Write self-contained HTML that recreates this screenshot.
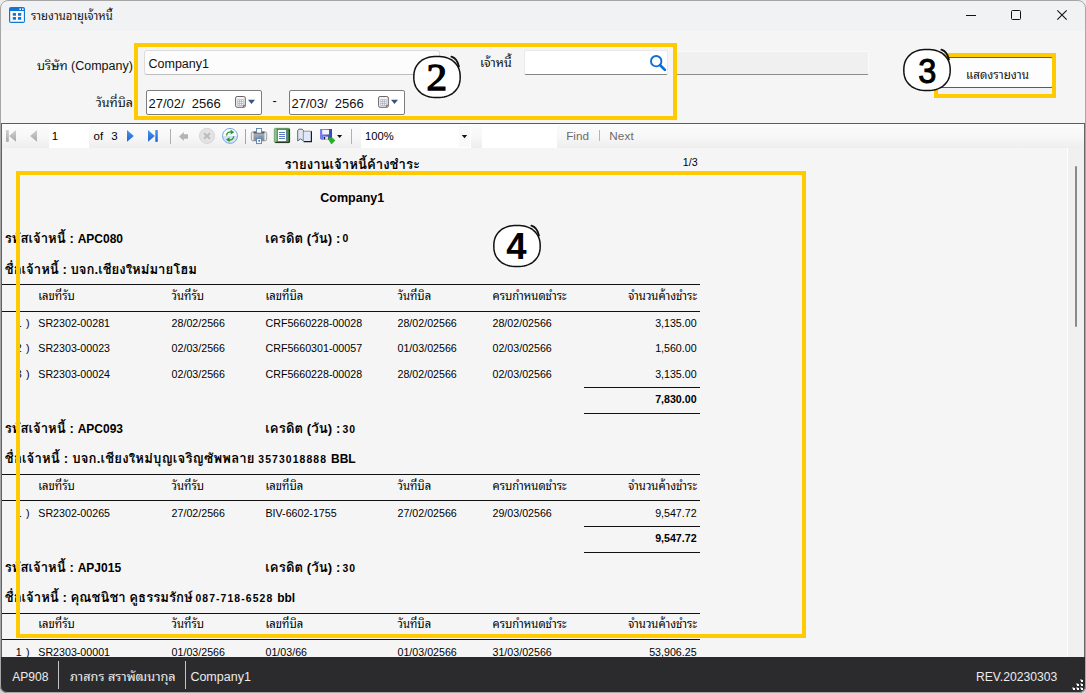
<!DOCTYPE html>
<html lang="th">
<head>
<meta charset="utf-8">
<title>รายงานอายุเจ้าหนี้</title>
<style>
*{box-sizing:border-box;margin:0;padding:0}
html,body{width:1086px;height:693px;overflow:hidden;background:#ececec}
body{background:linear-gradient(#ececec 0,#ececec 600px,#d4d4d4 601px,#d4d4d4 100%)}
body{font-family:"Liberation Sans","Noto Sans Thai Looped","Loma","Noto Sans Thai",sans-serif;color:#000;position:relative}
.a{position:absolute}
.t{position:absolute;white-space:pre;line-height:1;height:1em}
.r{text-align:right}
#win{position:absolute;left:0;top:0;width:1086px;height:693px;background:#f5f5f5;border-radius:8px 8px 7px 7px;overflow:hidden}
#frame{position:absolute;left:0;top:0;width:1086px;height:693px;border:1px solid #a6a6a6;border-radius:8px 8px 7px 7px;pointer-events:none}
.yb{position:absolute;border:4px solid #ffca00}
.rule{position:absolute;height:1px;background:#111}
.rep{font-size:10.67px;color:#000}
.repb{font-family:"Liberation Sans","Loma","Noto Sans Thai Looped",sans-serif;font-weight:bold;color:#000}
.sb{color:#ececec}
.tb{color:#000;font-size:12px}
</style>
</head>
<body>
<div id="win">
<div class="a" style="left:0;top:0;width:1086px;height:31px;background:#f1f2f4"></div>
<svg class="a" style="left:9px;top:7px" width="16" height="16" viewBox="0 0 16 16">
<rect x="0" y="0" width="16" height="16" rx="2" fill="#0b78d8"/>
<rect x="1.2" y="4" width="13.7" height="10.8" rx="0.4" fill="#fdf8f4"/>
<rect x="3.8" y="5.9" width="3.2" height="2.8" rx="0.5" fill="#0b78d8"/><rect x="9" y="5.9" width="3.2" height="2.8" rx="0.5" fill="#0b78d8"/>
<rect x="3.8" y="10" width="3.2" height="2.8" rx="0.5" fill="#0b78d8"/><rect x="9" y="10" width="3.2" height="2.8" rx="0.5" fill="#0b78d8"/>
<rect x="10.4" y="1.4" width="1.6" height="1.6" fill="#eef4fb"/><rect x="13" y="1.4" width="1.6" height="1.6" fill="#eef4fb"/>
</svg>
<div class="t " style="left:31.00px;top:11.43px;font-size:11.3px;color:#111">รายงานอายุเจ้าหนี้</div>
<svg class="a" style="left:960px;top:5px" width="116" height="20" viewBox="0 0 116 20">
<path d="M6 10.5H16" stroke="#111" stroke-width="1" fill="none"/>
<rect x="51.5" y="5.5" width="9" height="9" rx="1" stroke="#111" stroke-width="1" fill="none"/>
<path d="M97.3 5.3L106.7 14.7M106.7 5.3L97.3 14.7" stroke="#111" stroke-width="1.1" fill="none"/>
</svg>
<div class="t " style="right:953.10px;top:59.82px;font-size:12.5px;color:#111">บริษัท (Company)</div>
<div class="t " style="right:953.00px;top:96.82px;font-size:12.5px;color:#111">วันที่บิล</div>
<div class="a" style="left:144px;top:50px;width:296px;height:25px;background:#fcfcfc;border:1px solid #dcdcdc;border-bottom-color:#bdbdbd;border-radius:3px"></div>
<div class="t " style="left:148.50px;top:58.42px;font-size:12.5px;color:#111">Company1</div>
<div class="a" style="left:146px;top:90px;width:116px;height:25px;background:#fff;border:1px solid #7d7d7d;border-radius:2px"></div>
<div class="t " style="left:148.50px;top:96.90px;font-size:13px;color:#111">27/02/  2566</div>
<svg class="a" style="left:234px;top:95px" width="24" height="15" viewBox="0 0 24 15">
<rect x="2.2" y="2.2" width="9.6" height="10.8" rx="1.6" fill="#e9e9e9" opacity="0.8"/>
<rect x="1.6" y="1.5" width="9.7" height="10.8" rx="1.5" fill="#f1f4fb" stroke="#6f6362" stroke-width="1"/>
<rect x="3.3" y="4.2" width="6.4" height="6.8" fill="#b6b9c4"/>
<g fill="#fff"><rect x="4.2" y="5.1" width="1" height="1"/><rect x="6.1" y="5.1" width="1" height="1"/><rect x="8" y="5.1" width="1" height="1"/>
<rect x="4.2" y="7.1" width="1" height="1"/><rect x="6.1" y="7.1" width="1" height="1"/><rect x="8" y="7.1" width="1" height="1"/>
<rect x="4.2" y="9.1" width="1" height="1"/><rect x="6.1" y="9.1" width="1" height="1"/><rect x="8" y="9.1" width="1" height="1"/></g>
<path d="M9.4 12.3V10.4H11.3" fill="#e8ecf6" stroke="#6f6362" stroke-width="0.9"/>
<path d="M14 4.8H21L17.5 9Z" fill="#3a5280"/>
</svg>
<div class="a" style="left:289px;top:90px;width:116px;height:25px;background:#fff;border:1px solid #7d7d7d;border-radius:2px"></div>
<div class="t " style="left:291.50px;top:96.90px;font-size:13px;color:#111">27/03/  2566</div>
<svg class="a" style="left:377px;top:95px" width="24" height="15" viewBox="0 0 24 15">
<rect x="2.2" y="2.2" width="9.6" height="10.8" rx="1.6" fill="#e9e9e9" opacity="0.8"/>
<rect x="1.6" y="1.5" width="9.7" height="10.8" rx="1.5" fill="#f1f4fb" stroke="#6f6362" stroke-width="1"/>
<rect x="3.3" y="4.2" width="6.4" height="6.8" fill="#b6b9c4"/>
<g fill="#fff"><rect x="4.2" y="5.1" width="1" height="1"/><rect x="6.1" y="5.1" width="1" height="1"/><rect x="8" y="5.1" width="1" height="1"/>
<rect x="4.2" y="7.1" width="1" height="1"/><rect x="6.1" y="7.1" width="1" height="1"/><rect x="8" y="7.1" width="1" height="1"/>
<rect x="4.2" y="9.1" width="1" height="1"/><rect x="6.1" y="9.1" width="1" height="1"/><rect x="8" y="9.1" width="1" height="1"/></g>
<path d="M9.4 12.3V10.4H11.3" fill="#e8ecf6" stroke="#6f6362" stroke-width="0.9"/>
<path d="M14 4.8H21L17.5 9Z" fill="#3a5280"/>
</svg>
<div class="t " style="left:272.50px;top:94.92px;font-size:12.5px;">-</div>
<div class="t " style="right:574.10px;top:57.32px;font-size:12.5px;color:#111">เจ้าหนี้</div>
<div class="a" style="left:524px;top:50px;width:144px;height:25px;background:#fff;border:1px solid #e9e9e9;border-bottom:1px solid #868686;border-radius:2px"></div>
<svg class="a" style="left:647px;top:52px" width="22" height="22" viewBox="0 0 22 22">
<circle cx="9.2" cy="9.15" r="5.2" fill="none" stroke="#0a6ed8" stroke-width="1.9"/>
<path d="M13.2 13.3L17.9 17.9" stroke="#0a6ed8" stroke-width="2.7" stroke-linecap="round"/>
</svg>
<div class="a" style="left:676px;top:51px;width:193px;height:24px;background:#f0f0f0;border:1px solid #fafafa;border-bottom:1px solid #8c8c8c;border-radius:2px"></div>
<div class="yb" style="left:134px;top:43px;width:543px;height:77px"></div>
<div class="a" style="left:937px;top:88px;width:116px;height:7px;background:#f1f2f5"></div>
<div class="a" style="left:937px;top:57px;width:116px;height:31px;background:#fdfdfd;border:1px solid #0a6fd0;border-radius:2px"></div>
<div class="t " style="left:966.00px;top:69.18px;font-size:11.6px;color:#111">แสดงรายงาน</div>
<div class="yb" style="left:934px;top:53px;width:122px;height:45px"></div>
<svg class="a" style="left:406.5px;top:49.3px" width="60" height="56" viewBox="-30 -28 60 56">
<path d="M23.2 0.0L23.1 2.4L22.9 4.3L22.5 6.2L22.0 7.9L21.3 9.6L20.4 11.1L19.4 12.6L18.3 13.9L17.0 15.1L15.7 16.3L14.2 17.3L12.5 18.1L10.8 18.9L8.9 19.5L7.0 20.0L4.9 20.3L2.7 20.5L0.0 20.6L-2.7 20.5L-4.9 20.3L-7.0 20.0L-8.9 19.5L-10.8 18.9L-12.5 18.1L-14.2 17.3L-15.7 16.3L-17.0 15.1L-18.3 13.9L-19.4 12.6L-20.4 11.1L-21.3 9.6L-22.0 7.9L-22.5 6.2L-22.9 4.3L-23.1 2.4L-23.2 0.0L-23.1 -2.4L-22.9 -4.3L-22.5 -6.2L-22.0 -7.9L-21.3 -9.6L-20.4 -11.1L-19.4 -12.6L-18.3 -13.9L-17.0 -15.1L-15.7 -16.3L-14.2 -17.3L-12.5 -18.1L-10.8 -18.9L-8.9 -19.5L-7.0 -20.0L-4.9 -20.3L-2.7 -20.5L-0.0 -20.6L2.7 -20.5L4.9 -20.3L7.0 -20.0L8.9 -19.5L10.8 -18.9L12.5 -18.1L14.2 -17.3L15.7 -16.3L17.0 -15.1L18.3 -13.9L19.4 -12.6L20.4 -11.1L21.3 -9.6L22.0 -7.9L22.5 -6.2L22.9 -4.3L23.1 -2.4Z" fill="#fff" stroke="#111" stroke-width="1.5" stroke-linejoin="round"/>
<path d="M14.4 -20.3 C18 -19.2 20.8 -15.6 21.9 -10.6" fill="none" stroke="#111" stroke-width="1.9" stroke-linecap="round"/>
<text transform="translate(-0.2 12.6) scale(1.08 1)" x="0" y="0" text-anchor="middle" font-family="'Liberation Serif','DejaVu Serif',serif" font-weight="normal" font-size="38" fill="#000" stroke="#000" stroke-width="1.3">2</text>
</svg>
<svg class="a" style="left:897.2px;top:42.2px" width="60" height="56" viewBox="-30 -28 60 56">
<path d="M23.2 0.0L23.1 2.4L22.9 4.3L22.5 6.2L22.0 7.9L21.3 9.6L20.4 11.1L19.4 12.6L18.3 13.9L17.0 15.1L15.7 16.3L14.2 17.3L12.5 18.1L10.8 18.9L8.9 19.5L7.0 20.0L4.9 20.3L2.7 20.5L0.0 20.6L-2.7 20.5L-4.9 20.3L-7.0 20.0L-8.9 19.5L-10.8 18.9L-12.5 18.1L-14.2 17.3L-15.7 16.3L-17.0 15.1L-18.3 13.9L-19.4 12.6L-20.4 11.1L-21.3 9.6L-22.0 7.9L-22.5 6.2L-22.9 4.3L-23.1 2.4L-23.2 0.0L-23.1 -2.4L-22.9 -4.3L-22.5 -6.2L-22.0 -7.9L-21.3 -9.6L-20.4 -11.1L-19.4 -12.6L-18.3 -13.9L-17.0 -15.1L-15.7 -16.3L-14.2 -17.3L-12.5 -18.1L-10.8 -18.9L-8.9 -19.5L-7.0 -20.0L-4.9 -20.3L-2.7 -20.5L-0.0 -20.6L2.7 -20.5L4.9 -20.3L7.0 -20.0L8.9 -19.5L10.8 -18.9L12.5 -18.1L14.2 -17.3L15.7 -16.3L17.0 -15.1L18.3 -13.9L19.4 -12.6L20.4 -11.1L21.3 -9.6L22.0 -7.9L22.5 -6.2L22.9 -4.3L23.1 -2.4Z" fill="#fff" stroke="#111" stroke-width="1.5" stroke-linejoin="round"/>
<path d="M14.4 -20.3 C18 -19.2 20.8 -15.6 21.9 -10.6" fill="none" stroke="#111" stroke-width="1.9" stroke-linecap="round"/>
<text transform="translate(0.2 12.9) scale(0.93 1)" x="0" y="0" text-anchor="middle" font-family="'Liberation Sans','DejaVu Sans',sans-serif" font-weight="normal" font-size="35" fill="#000" stroke="#000" stroke-width="1.0">3</text>
</svg>
<div class="a" style="left:1px;top:123px;width:1084px;height:1px;background:#5c5c5c"></div>
<div class="a" style="left:2px;top:124px;width:1082px;height:1px;background:#fff"></div>
<div class="a" style="left:2px;top:125px;width:1082px;height:23px;background:linear-gradient(#fbfbfb,#f8f8f8 45%,#eeeeee)"></div>
<div class="a" style="left:1px;top:123px;width:1px;height:534px;background:#626262"></div>
<div class="a" style="left:1084px;top:123px;width:1px;height:534px;background:#666;z-index:3"></div>
<svg class="a" style="left:0;top:124px" width="360" height="24" viewBox="0 124 360 24">
<defs>
<linearGradient id="gg" x1="0" y1="0" x2="0" y2="1"><stop offset="0" stop-color="#cfcfcf"/><stop offset="1" stop-color="#a9a9a9"/></linearGradient>
<linearGradient id="gb" x1="0" y1="0" x2="0" y2="1"><stop offset="0" stop-color="#4a96f0"/><stop offset="1" stop-color="#1d62cf"/></linearGradient>
<linearGradient id="gp" x1="0" y1="0" x2="0" y2="1"><stop offset="0" stop-color="#b9bdc4"/><stop offset="1" stop-color="#7d828b"/></linearGradient>
<linearGradient id="gr" x1="0" y1="0" x2="0" y2="1"><stop offset="0" stop-color="#ffffff"/><stop offset="0.5" stop-color="#f4f8fd"/><stop offset="0.5" stop-color="#cfe0f6"/><stop offset="1" stop-color="#dce9f9"/></linearGradient>
<linearGradient id="gf" x1="0" y1="0" x2="1" y2="0"><stop offset="0" stop-color="#7f82ee"/><stop offset="0.6" stop-color="#5558d8"/><stop offset="1" stop-color="#3c3fae"/></linearGradient>
<linearGradient id="gl" x1="0" y1="0" x2="1" y2="0"><stop offset="0" stop-color="#a6cfa4"/><stop offset="0.25" stop-color="#5fa55d"/><stop offset="1" stop-color="#4a9448"/></linearGradient>
</defs>
<rect x="6" y="130" width="2.8" height="11.8" fill="url(#gg)"/><path d="M16 130V141.8L9.1 135.9Z" fill="url(#gg)"/>
<path d="M37 130V141.8L30.1 135.9Z" fill="url(#gg)"/>
<path d="M127 130V141.8L133.8 135.9Z" fill="url(#gb)"/>
<path d="M148 130V141.8L154.8 135.9Z" fill="url(#gb)"/><rect x="155.3" y="130" width="2.5" height="11.8" fill="url(#gb)"/>
<rect x="170" y="129" width="1" height="15" fill="#b0b0b0"/>
<path d="M179 136.5L183.8 132V134.2H188V138.8H183.8V141Z" fill="#b4b4b4"/>
<circle cx="207" cy="135.9" r="7.6" fill="#e3e3e3" stroke="#d2d2d2" stroke-width="0.8"/>
<path d="M204 133.3L210 138.7M210 133.3L204 138.7" stroke="#bcbcbc" stroke-width="2.1"/>
<circle cx="230" cy="135.9" r="7.5" fill="url(#gr)" stroke="#7ba8e2" stroke-width="1"/>
<path d="M226.6 135.6C226.6 132.6 229 131.6 231.6 131.9" fill="none" stroke="#2e9a2e" stroke-width="1.4"/><path d="M230.6 129.6L234.3 132.2L230.6 134.6Z" fill="#2e9a2e"/>
<path d="M233.6 136.2C233.6 139.2 231.2 140.2 228.6 139.9" fill="none" stroke="#2e9a2e" stroke-width="1.4"/><path d="M229.6 142.2L225.9 139.6L229.6 137.2Z" fill="#2e9a2e"/>
<rect x="245" y="129" width="1" height="15" fill="#a6a6a6"/>
<rect x="251.3" y="131.8" width="15.4" height="9" rx="1.8" fill="#e9eaec" stroke="#7d8087" stroke-width="0.7"/>
<rect x="253.6" y="131.6" width="10.8" height="9.2" fill="url(#gp)"/>
<rect x="253.6" y="131.6" width="10.8" height="1.9" fill="#5b5d62"/>
<rect x="256.5" y="128.5" width="5" height="4.6" fill="#fff" stroke="#5f7fa6" stroke-width="0.9"/>
<rect x="259" y="135.9" width="3.2" height="1.3" fill="#4f9df0"/>
<rect x="256.5" y="138.6" width="5" height="5" fill="#f6f9ff" stroke="#5f7fa6" stroke-width="0.9"/><rect x="258.4" y="140" width="1.6" height="1.6" fill="#2f6fe0"/>
<rect x="274.3" y="128.3" width="15.4" height="14.4" rx="1.2" fill="url(#gl)" stroke="#3f7d3f" stroke-width="0.6"/>
<path d="M289.3 129.4V142.3H275.4" fill="none" stroke="#142414" stroke-width="1"/>
<rect x="277.5" y="129.5" width="9" height="12" fill="#fff" stroke="#3d5068" stroke-width="0.6"/>
<path d="M279 132.5H285M279 134.5H285M279 136.5H285M279 138.5H285" stroke="#5b7fc4" stroke-width="1"/>
<path d="M297.7 130.4L299 129.2H302.2L303.4 130.4V140.9L300.5 138.9L297.7 140.9Z" fill="#e3e5e8" stroke="#3f5878" stroke-width="0.9"/>
<rect x="303.6" y="131.3" width="7.8" height="10.4" fill="#dfe8f8"/>
<path d="M303.6 131.2H311.4" fill="none" stroke="#555" stroke-width="0.6"/><path d="M311.4 131.2V141.6H303.6" fill="none" stroke="#1c1c1c" stroke-width="1.2"/>
<path d="M320 129H332V139.8H321.2L320 138.6Z" fill="url(#gf)"/>
<rect x="322.2" y="129.8" width="6.8" height="4.7" fill="#f2f3ff"/><rect x="323" y="136.6" width="5" height="3" fill="#e4e6f2"/><rect x="323.6" y="137" width="1.6" height="2.4" fill="#222"/>
<path d="M329.2 134.2C328.6 136 329.2 137.6 330.4 138.6" fill="none" stroke="#1f8f1f" stroke-width="1"/>
<path d="M328.2 138.8L331.3 137L335 140.4L331.5 144Z" fill="#23b023" stroke="#1c8c1c" stroke-width="0.5"/>
<path d="M337 135H342.2L339.6 138Z" fill="#111"/>
<rect x="351" y="129" width="1" height="15" fill="#b0b0b0"/>
</svg>
<div class="a" style="left:49px;top:124px;width:40px;height:24px;background:#fff"></div>
<div class="t tb" style="left:51.80px;top:130.67px;font-size:11.5px;">1</div>
<div class="t tb" style="left:93.50px;top:130.67px;font-size:11.5px;word-spacing:0.9px">of  3</div>
<div class="a" style="left:361px;top:124px;width:110px;height:24px;background:#fff"></div>
<div class="a" style="left:459px;top:126px;width:11px;height:21px;background:#f9f9f9"></div>
<svg class="a" style="left:460px;top:133px" width="10" height="7" viewBox="0 0 10 7"><path d="M1.8 2H7.2L4.5 5.2Z" fill="#111"/></svg>
<div class="t tb" style="left:365.00px;top:130.82px;font-size:11.2px;">100%</div>
<div class="a" style="left:482px;top:124px;width:75px;height:24px;background:#fff"></div>
<div class="t tb" style="left:566.20px;top:130.40px;font-size:11.7px;color:#6b6b6b">Find</div>
<div class="a" style="left:599px;top:130px;width:1px;height:11px;background:#b5b5b5"></div>
<div class="t tb" style="left:609.20px;top:130.40px;font-size:11.7px;color:#6b6b6b;letter-spacing:0.15px">Next</div>
<div class="t repb" style="left:284.50px;top:158.13px;font-size:13.2px;">รายงานเจ้าหนี้ค้างชำระ</div>
<div class="t rep" style="left:682.80px;top:156.97px;font-size:10.67px;">1/3</div>
<div class="t repb" style="left:320.30px;top:191.92px;font-size:12.5px;">Company1</div>
<div class="t repb" style="left:4.80px;top:231.57px;font-size:13.15px;">รหัสเจ้าหนี้ : </div>
<div class="t repb" style="left:77.70px;top:232.54px;font-size:12px;">APC080</div>
<div class="t repb" style="left:265.30px;top:231.57px;font-size:13.15px;letter-spacing:0.08px">เครดิต (วัน) : </div>
<div class="t repb" style="left:342.40px;top:234.10px;font-size:10.4px;letter-spacing:1.1px">0</div>
<div class="t repb" style="left:4.80px;top:263.47px;font-size:13.15px;letter-spacing:0px">ชื่อเจ้าหนี้ : บจก.เชียงใหม่มายโฮม</div>
<div class="rule" style="left:2px;top:284px;width:698px"></div>
<div class="t rep" style="left:38.30px;top:291.23px;font-size:11.3px;">เลขที่รับ</div>
<div class="t rep" style="left:171.60px;top:291.23px;font-size:11.3px;">วันที่รับ</div>
<div class="t rep" style="left:265.50px;top:291.23px;font-size:11.3px;">เลขที่บิล</div>
<div class="t rep" style="left:397.50px;top:291.23px;font-size:11.3px;">วันที่บิล</div>
<div class="t rep" style="left:492.50px;top:291.23px;font-size:11.3px;">ครบกำหนดชำระ</div>
<div class="t rep" style="right:389.00px;top:291.23px;font-size:11.3px;">จำนวนค้างชำระ</div>
<div class="rule" style="left:2px;top:311px;width:698px"></div>
<div class="t rep" style="left:15.80px;top:317.67px;font-size:10.67px;word-spacing:1.2px">1 )</div>
<div class="t rep" style="left:38.30px;top:317.67px;font-size:10.67px;">SR2302-00281</div>
<div class="t rep" style="left:171.60px;top:317.67px;font-size:10.67px;">28/02/2566</div>
<div class="t rep" style="left:265.50px;top:317.67px;font-size:10.67px;">CRF5660228-00028</div>
<div class="t rep" style="left:397.50px;top:317.67px;font-size:10.67px;">28/02/02566</div>
<div class="t rep" style="left:492.50px;top:317.67px;font-size:10.67px;">28/02/02566</div>
<div class="t rep" style="right:389.40px;top:317.67px;font-size:10.67px;">3,135.00</div>
<div class="t rep" style="left:15.80px;top:343.37px;font-size:10.67px;word-spacing:1.2px">2 )</div>
<div class="t rep" style="left:38.30px;top:343.37px;font-size:10.67px;">SR2303-00023</div>
<div class="t rep" style="left:171.60px;top:343.37px;font-size:10.67px;">02/03/2566</div>
<div class="t rep" style="left:265.50px;top:343.37px;font-size:10.67px;">CRF5660301-00057</div>
<div class="t rep" style="left:397.50px;top:343.37px;font-size:10.67px;">01/03/02566</div>
<div class="t rep" style="left:492.50px;top:343.37px;font-size:10.67px;">02/03/02566</div>
<div class="t rep" style="right:389.40px;top:343.37px;font-size:10.67px;">1,560.00</div>
<div class="t rep" style="left:15.80px;top:368.67px;font-size:10.67px;word-spacing:1.2px">3 )</div>
<div class="t rep" style="left:38.30px;top:368.67px;font-size:10.67px;">SR2303-00024</div>
<div class="t rep" style="left:171.60px;top:368.67px;font-size:10.67px;">02/03/2566</div>
<div class="t rep" style="left:265.50px;top:368.67px;font-size:10.67px;">CRF5660228-00028</div>
<div class="t rep" style="left:397.50px;top:368.67px;font-size:10.67px;">28/02/02566</div>
<div class="t rep" style="left:492.50px;top:368.67px;font-size:10.67px;">02/03/02566</div>
<div class="t rep" style="right:389.40px;top:368.67px;font-size:10.67px;">3,135.00</div>
<div class="rule" style="left:584px;top:387px;width:116px"></div>
<div class="t repb" style="right:389.40px;top:393.87px;font-size:10.67px;">7,830.00</div>
<div class="rule" style="left:584px;top:413px;width:116px"></div>
<div class="t repb" style="left:4.80px;top:422.37px;font-size:13.15px;">รหัสเจ้าหนี้ : </div>
<div class="t repb" style="left:77.70px;top:423.34px;font-size:12px;">APC093</div>
<div class="t repb" style="left:265.30px;top:422.37px;font-size:13.15px;letter-spacing:0.08px">เครดิต (วัน) : </div>
<div class="t repb" style="left:342.40px;top:424.90px;font-size:10.4px;letter-spacing:1.1px">30</div>
<div class="t repb" style="left:4.80px;top:452.27px;font-size:13.15px;letter-spacing:0.17px">ชื่อเจ้าหนี้ : บจก.เชียงใหม่บุญเจริญซัพพลาย</div>
<div class="t repb" style="left:258.30px;top:454.60px;font-size:10.4px;letter-spacing:1.1px">3573018888</div>
<div class="t repb" style="left:331.00px;top:453.24px;font-size:12px;letter-spacing:0px">BBL</div>
<div class="rule" style="left:2px;top:474px;width:698px"></div>
<div class="t rep" style="left:38.30px;top:480.93px;font-size:11.3px;">เลขที่รับ</div>
<div class="t rep" style="left:171.60px;top:480.93px;font-size:11.3px;">วันที่รับ</div>
<div class="t rep" style="left:265.50px;top:480.93px;font-size:11.3px;">เลขที่บิล</div>
<div class="t rep" style="left:397.50px;top:480.93px;font-size:11.3px;">วันที่บิล</div>
<div class="t rep" style="left:492.50px;top:480.93px;font-size:11.3px;">ครบกำหนดชำระ</div>
<div class="t rep" style="right:389.00px;top:480.93px;font-size:11.3px;">จำนวนค้างชำระ</div>
<div class="rule" style="left:2px;top:500px;width:698px"></div>
<div class="t rep" style="left:15.80px;top:507.57px;font-size:10.67px;word-spacing:1.2px">1 )</div>
<div class="t rep" style="left:38.30px;top:507.57px;font-size:10.67px;">SR2302-00265</div>
<div class="t rep" style="left:171.60px;top:507.57px;font-size:10.67px;">27/02/2566</div>
<div class="t rep" style="left:265.50px;top:507.57px;font-size:10.67px;">BIV-6602-1755</div>
<div class="t rep" style="left:397.50px;top:507.57px;font-size:10.67px;">27/02/02566</div>
<div class="t rep" style="left:492.50px;top:507.57px;font-size:10.67px;">29/03/02566</div>
<div class="t rep" style="right:389.40px;top:507.57px;font-size:10.67px;">9,547.72</div>
<div class="rule" style="left:584px;top:526px;width:116px"></div>
<div class="t repb" style="right:389.40px;top:532.77px;font-size:10.67px;">9,547.72</div>
<div class="rule" style="left:584px;top:552px;width:116px"></div>
<div class="t repb" style="left:4.80px;top:561.17px;font-size:13.15px;">รหัสเจ้าหนี้ : </div>
<div class="t repb" style="left:77.70px;top:562.14px;font-size:12px;">APJ015</div>
<div class="t repb" style="left:265.30px;top:561.17px;font-size:13.15px;letter-spacing:0.08px">เครดิต (วัน) : </div>
<div class="t repb" style="left:342.40px;top:563.70px;font-size:10.4px;letter-spacing:1.1px">30</div>
<div class="t repb" style="left:4.80px;top:591.17px;font-size:13.15px;letter-spacing:0px">ชื่อเจ้าหนี้ : คุณชนิชา คูธรรมรักษ์</div>
<div class="t repb" style="left:195.40px;top:593.50px;font-size:10.4px;letter-spacing:1.1px">087-718-6528</div>
<div class="t repb" style="left:277.20px;top:592.14px;font-size:12px;letter-spacing:0px">bbl</div>
<div class="rule" style="left:2px;top:613px;width:698px"></div>
<div class="t rep" style="left:38.30px;top:619.13px;font-size:11.3px;">เลขที่รับ</div>
<div class="t rep" style="left:171.60px;top:619.13px;font-size:11.3px;">วันที่รับ</div>
<div class="t rep" style="left:265.50px;top:619.13px;font-size:11.3px;">เลขที่บิล</div>
<div class="t rep" style="left:397.50px;top:619.13px;font-size:11.3px;">วันที่บิล</div>
<div class="t rep" style="left:492.50px;top:619.13px;font-size:11.3px;">ครบกำหนดชำระ</div>
<div class="t rep" style="right:389.00px;top:619.13px;font-size:11.3px;">จำนวนค้างชำระ</div>
<div class="rule" style="left:2px;top:639px;width:698px"></div>
<div class="t rep" style="left:15.80px;top:646.87px;font-size:10.67px;word-spacing:1.2px">1 )</div>
<div class="t rep" style="left:38.30px;top:646.87px;font-size:10.67px;">SR2303-00001</div>
<div class="t rep" style="left:171.60px;top:646.87px;font-size:10.67px;">01/03/2566</div>
<div class="t rep" style="left:265.50px;top:646.87px;font-size:10.67px;">01/03/66</div>
<div class="t rep" style="left:397.50px;top:646.87px;font-size:10.67px;">01/03/02566</div>
<div class="t rep" style="left:492.50px;top:646.87px;font-size:10.67px;">31/03/02566</div>
<div class="t rep" style="right:389.40px;top:646.87px;font-size:10.67px;">53,906.25</div>
<div class="yb" style="left:16px;top:171px;width:790px;height:467px"></div>
<svg class="a" style="left:487.20000000000005px;top:218.4px" width="60" height="56" viewBox="-30 -28 60 56">
<path d="M23.2 0.0L23.1 2.4L22.9 4.3L22.5 6.2L22.0 7.9L21.3 9.6L20.4 11.1L19.4 12.6L18.3 13.9L17.0 15.1L15.7 16.3L14.2 17.3L12.5 18.1L10.8 18.9L8.9 19.5L7.0 20.0L4.9 20.3L2.7 20.5L0.0 20.6L-2.7 20.5L-4.9 20.3L-7.0 20.0L-8.9 19.5L-10.8 18.9L-12.5 18.1L-14.2 17.3L-15.7 16.3L-17.0 15.1L-18.3 13.9L-19.4 12.6L-20.4 11.1L-21.3 9.6L-22.0 7.9L-22.5 6.2L-22.9 4.3L-23.1 2.4L-23.2 0.0L-23.1 -2.4L-22.9 -4.3L-22.5 -6.2L-22.0 -7.9L-21.3 -9.6L-20.4 -11.1L-19.4 -12.6L-18.3 -13.9L-17.0 -15.1L-15.7 -16.3L-14.2 -17.3L-12.5 -18.1L-10.8 -18.9L-8.9 -19.5L-7.0 -20.0L-4.9 -20.3L-2.7 -20.5L-0.0 -20.6L2.7 -20.5L4.9 -20.3L7.0 -20.0L8.9 -19.5L10.8 -18.9L12.5 -18.1L14.2 -17.3L15.7 -16.3L17.0 -15.1L18.3 -13.9L19.4 -12.6L20.4 -11.1L21.3 -9.6L22.0 -7.9L22.5 -6.2L22.9 -4.3L23.1 -2.4Z" fill="#fff" stroke="#111" stroke-width="1.5" stroke-linejoin="round"/>
<path d="M14.4 -20.3 C18 -19.2 20.8 -15.6 21.9 -10.6" fill="none" stroke="#111" stroke-width="1.9" stroke-linecap="round"/>
<text transform="translate(-0.6 12.7) scale(1.0 1)" x="0" y="0" text-anchor="middle" font-family="'Liberation Sans','DejaVu Sans',sans-serif" font-weight="bold" font-size="36.6" fill="#000" stroke="#000" stroke-width="0">4</text>
</svg>
<div class="a" style="left:1067px;top:148px;width:1px;height:509px;background:#fff"></div>
<div class="a" style="left:1068px;top:148px;width:16px;height:509px;background:#f0f0f0"></div>
<div class="a" style="left:1075px;top:166px;width:2px;height:161px;background:#8a8a8a;border-radius:1px"></div>
<div class="a" style="left:0;top:657px;width:1086px;height:36px;background:#2b2b2d"></div>
<div class="t sb" style="left:12.20px;top:671.36px;font-size:12.1px;">AP908</div>
<div class="a" style="left:58px;top:661px;width:1px;height:28px;background:#c4c4c4"></div>
<div class="t sb" style="left:70.00px;top:671.01px;font-size:12.75px;">ภาสกร สราพัฒนากุล</div>
<div class="a" style="left:185px;top:661px;width:1px;height:28px;background:#c4c4c4"></div>
<div class="t sb" style="left:190.40px;top:671.02px;font-size:12.5px;">Company1</div>
<div class="t sb" style="left:976.00px;top:670.92px;font-size:12.15px;">REV.20230303</div>
<svg class="a" style="left:1070px;top:677px" width="15" height="15" viewBox="1070 677 15 15"><rect x="1080" y="679" width="2" height="2" fill="#808080"/><rect x="1076" y="683" width="2" height="2" fill="#808080"/><rect x="1080" y="683" width="2" height="2" fill="#808080"/><rect x="1072" y="687" width="2" height="2" fill="#808080"/><rect x="1076" y="687" width="2" height="2" fill="#808080"/><rect x="1080" y="687" width="2" height="2" fill="#808080"/><rect x="1081" y="680" width="2" height="2" fill="#fff"/><rect x="1077" y="684" width="2" height="2" fill="#fff"/><rect x="1081" y="684" width="2" height="2" fill="#fff"/><rect x="1073" y="688" width="2" height="2" fill="#fff"/><rect x="1077" y="688" width="2" height="2" fill="#fff"/><rect x="1081" y="688" width="2" height="2" fill="#fff"/></svg>
</div>
<div id="frame"></div>
</body>
</html>
